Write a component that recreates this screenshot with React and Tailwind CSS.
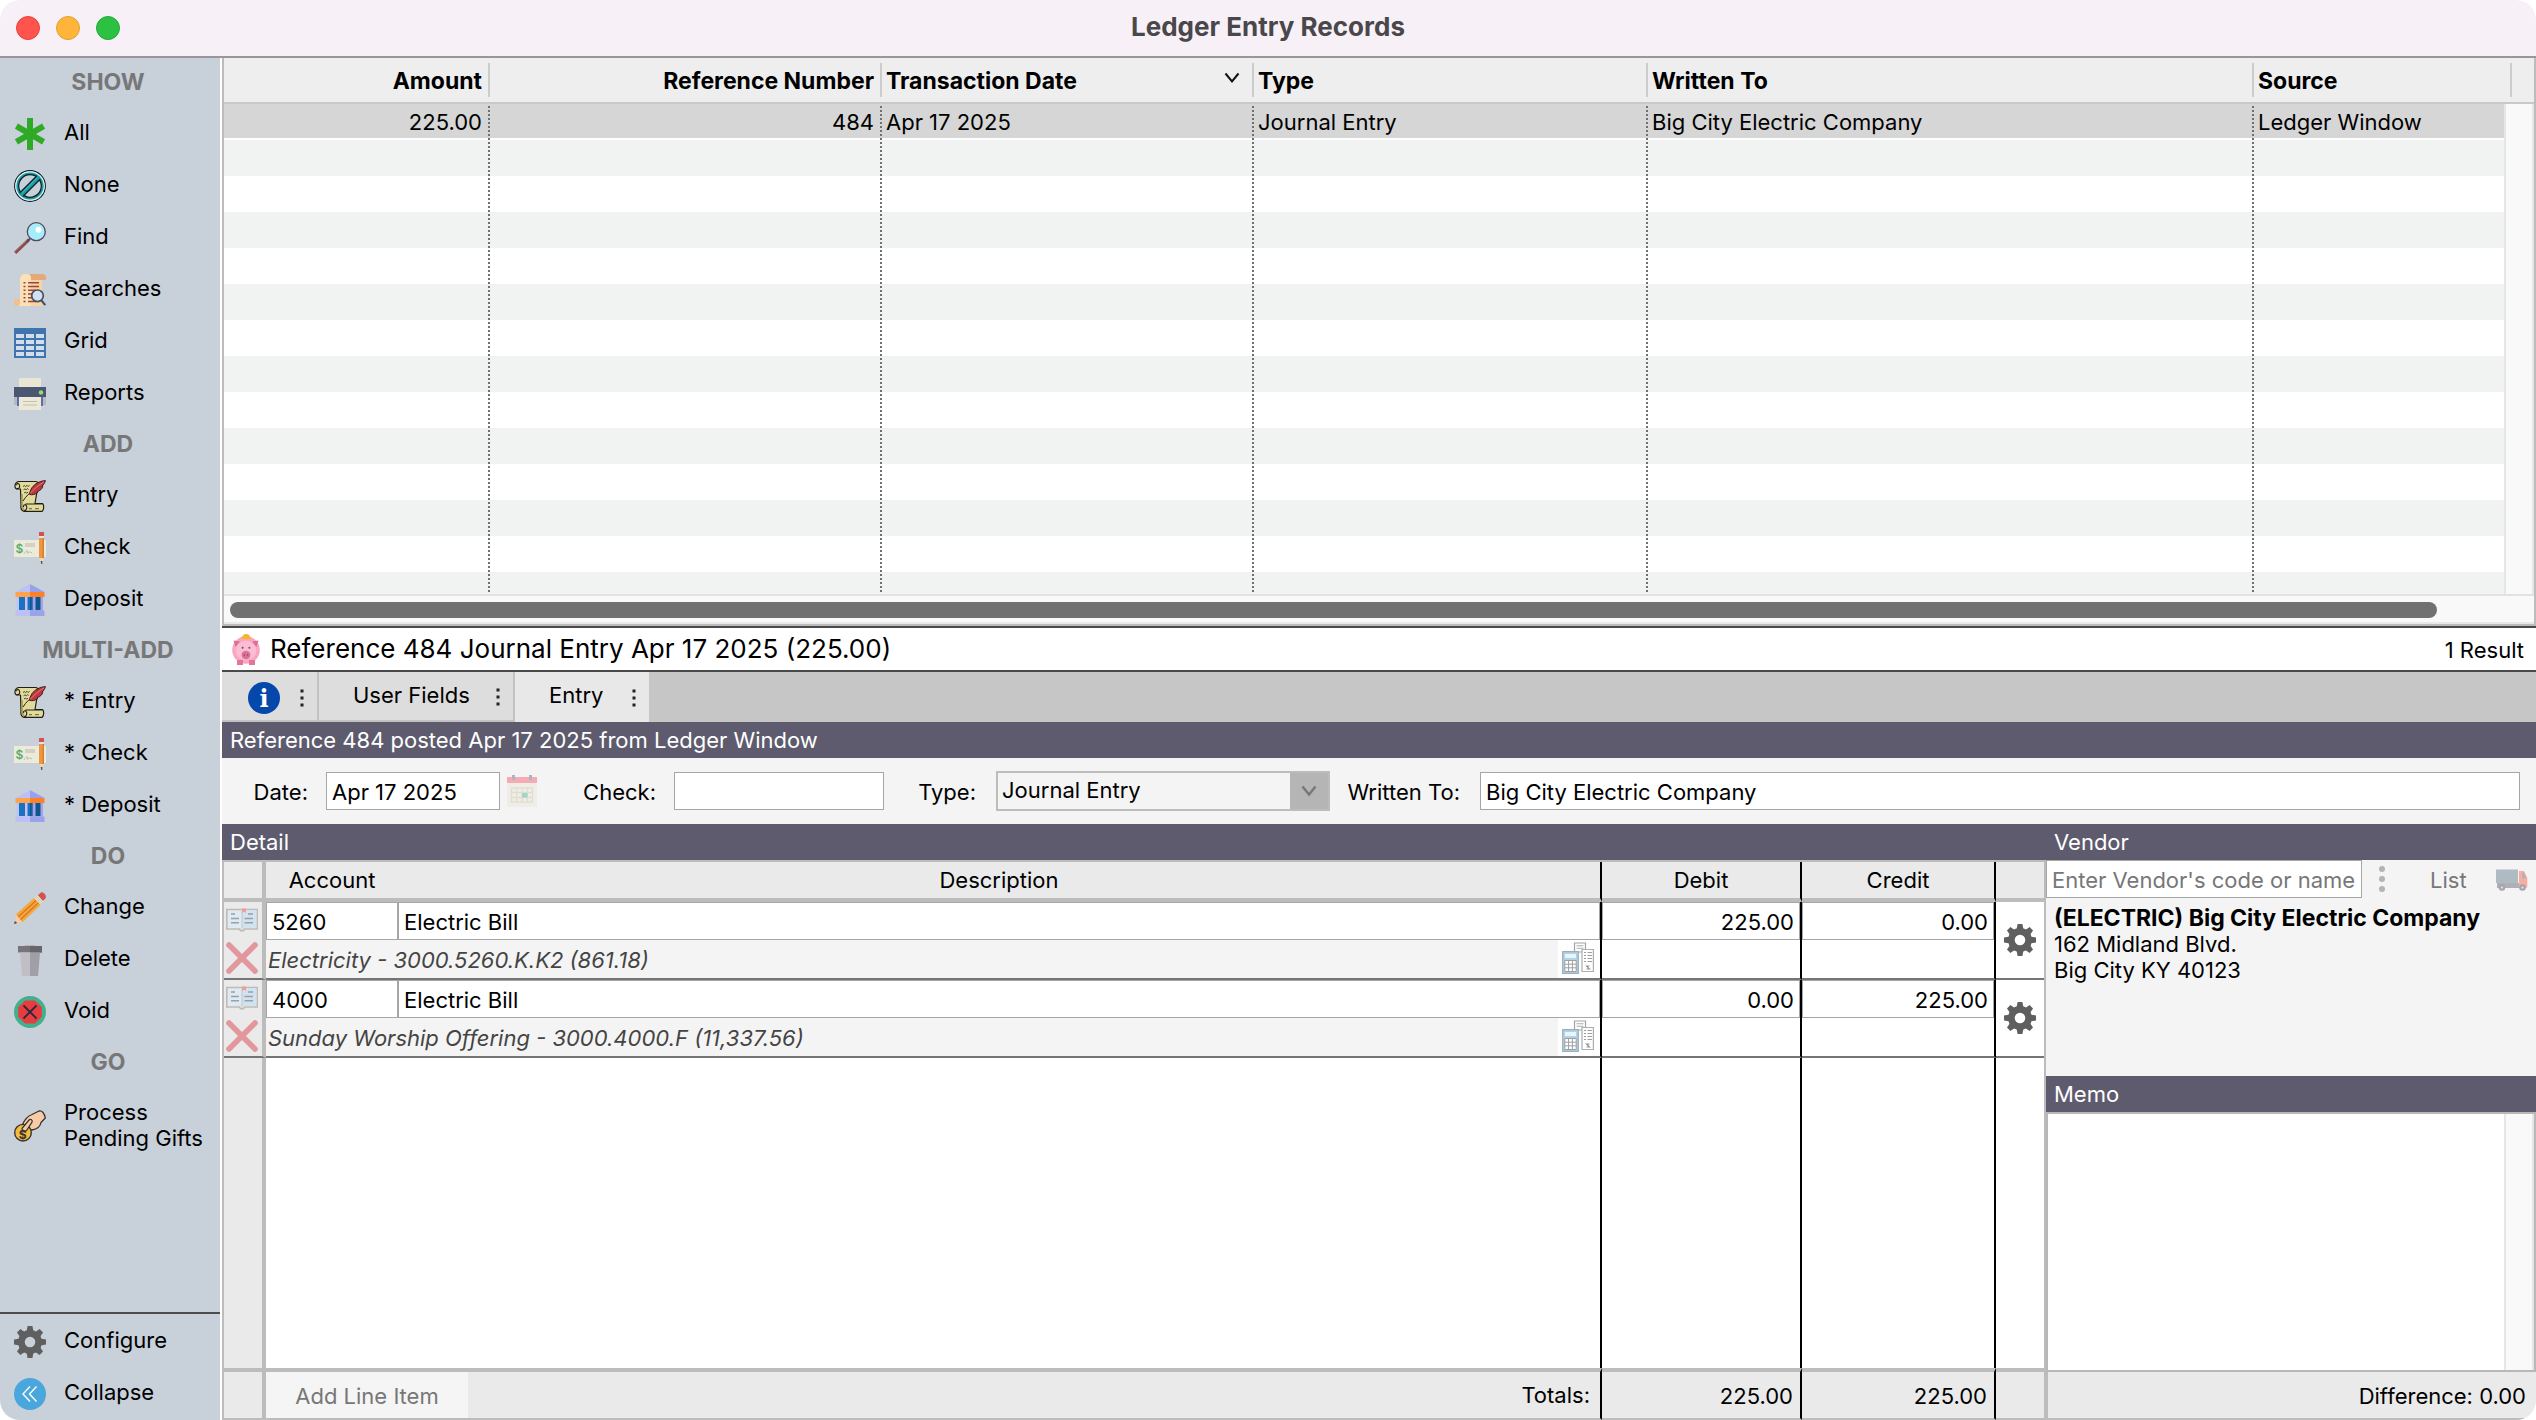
import React from "react";

/* ---------- icons ---------- */

function Svg({ children, className = "size-8", box = "0 0 32 32" }) {
  return (
    <svg viewBox={box} className={`${className} shrink-0`} aria-hidden="true" fill="none">
      {children}
    </svg>
  );
}

const AsteriskIcon = () => (
  <Svg>
    <g stroke="#2faa27" strokeWidth="6">
      <path d="M16 0V32" />
      <path d="M2.4 8.2L29.6 23.8" />
      <path d="M29.6 8.2L2.4 23.8" />
    </g>
  </Svg>
);

const NoneIcon = () => (
  <Svg>
    <circle cx="16" cy="16" r="15.3" stroke="#0a1a1c" strokeWidth="1.2" />
    <circle cx="16" cy="16" r="14" stroke="#d8f3f3" strokeWidth="1.6" />
    <circle cx="16" cy="16" r="12.6" stroke="#179aa3" strokeWidth="2" />
    <circle cx="16" cy="16" r="11.3" stroke="#0a1a1c" strokeWidth="1.2" />
    <path d="M24.6 7.4L7.4 24.6" stroke="#0a1a1c" strokeWidth="6" />
    <path d="M25 7L7 25" stroke="#179aa3" strokeWidth="3.8" />
    <path d="M23 8.2L8 23.2" stroke="#5cc8cc" strokeWidth="0.8" />
  </Svg>
);

const FindIcon = () => (
  <Svg>
    <path d="M1.2 30.8L15 17.6" stroke="#8a4d4d" strokeWidth="3.2" />
    <path d="M1 29.6L13 18" stroke="#b07070" strokeWidth="0.8" />
    <path d="M13 19.6L16 16.6" stroke="#54485e" strokeWidth="2" />
    <circle cx="22.3" cy="9.7" r="9" fill="#a5edfb" stroke="#54485e" strokeWidth="1.3" />
    <circle cx="24.5" cy="7.8" r="3" fill="#fff" />
  </Svg>
);

const SearchesIcon = () => (
  <Svg>
    <path d="M0 25h6v7H3a3 3 0 0 1-3-3z" fill="#f1c08c" />
    <path d="M6 5a5 5 0 0 1 5-5h17v32H4a3 3 0 0 0 2-3z" fill="#fde0b8" />
    <path d="M17 5h11v27H17z" fill="#fbd2a4" />
    <path d="M13 0h15a4 4 0 0 1 4 4v2H17V4a4 4 0 0 0-4-4z" fill="#e2aa78" />
    <g stroke="#96483a" strokeWidth="1.5">
      <path d="M9.5 8.7h2M14 8.7h11M9.5 12.5h2M14 12.5h11M9.5 16.3h2M14 16.3h8M9.5 20h2M14 20h4M9.5 23.7h2M14 23.7h5M9.5 27.4h2M14 27.4h8" />
    </g>
    <path d="M27 26L31.3 31" stroke="#47505c" strokeWidth="2" />
    <circle cx="23.5" cy="21.8" r="5.8" fill="#d3e0f4" stroke="#47505c" strokeWidth="1.7" />
  </Svg>
);

const GridIcon = () => (
  <Svg>
    <path d="M0 2H32V32H0z" fill="#3f74ae" />
    <g fill="#d3dde9">
      {[8, 14, 20, 26].map((y) =>
        [2, 12, 22].map((x) => <rect key={`${x}-${y}`} x={x} y={y} width="8" height="4" />)
      )}
    </g>
  </Svg>
);

const ReportsIcon = () => (
  <Svg>
    <path d="M5 0h22v12H5z" fill="#e9e6d3" />
    <path d="M0 9h32v10H0z" fill="#4b5673" />
    <path d="M0 19h32v8H0z" fill="#b6bac0" />
    <path d="M3 19h26v9H3z" fill="#5b70a8" />
    <path d="M5 19h22v13H5z" fill="#ece9d8" />
    <path d="M9 23.5h14M9 27h14" stroke="#c6c1a2" strokeWidth="1" />
    <circle cx="27" cy="14.5" r="2.2" fill="#93dd6b" />
  </Svg>
);

const EntryIcon = () => (
  <Svg>
    <path
      d="M4.5 1.5h17c2 0 3 1.5 2.5 4L21 23.5H28.5c1.6 1.4 1.6 6-.3 7.8H10c-2.4-.6-3.4-3-3-6L6.5 9H2.5C0 7.4 .5 2.5 4.5 1.5z"
      fill="#e2dc9c"
      stroke="#221f16"
      strokeWidth="1.2"
      strokeLinejoin="round"
    />
    <path d="M2.5 8.6C5.5 9 6.4 6.5 5.2 4.3c-1-1.5-2.8-.8-2.6 1" stroke="#221f16" strokeWidth="1.1" />
    <path d="M8 14v10c0 3 .6 5 2.4 6" stroke="#a49a52" strokeWidth="1.6" />
    <path d="M10 31c3-.5 3.6-4.5 1.7-6-1.4-.8-2.6.5-2 2M11.5 24H28" stroke="#221f16" strokeWidth="1.1" />
    <path d="M15 28.7h3M21 28.7h4" stroke="#57512a" strokeWidth=".9" />
    <path d="M9 6.5l1.5-1 1 1.2 1.5-1.4 1 1.2 1.5-1M9.500 9.8l1.5-1 1.2 1 1.5-1.2 1 1M10 13l1.5-1 1 1.2 1.5-1" stroke="#3b3726" strokeWidth=".9" />
    <path d="M9 21C12 16 16 12.5 21 9" stroke="#221f16" strokeWidth="1" />
    <path
      d="M31.4.6C26 .8 20.5 4 18 7.6c-1.500 2.4-2.200 4.500-2.700 6.700 2.700 1.200 6.500.1 8.700-2.200l-.6-.6c2.600-.6 4.600-2.600 5.400-5l-.8-.3C29.8 4.600 30.9 2.700 31.4.6z"
      fill="#b9393f"
      stroke="#3a1216"
      strokeWidth=".9"
    />
    <path d="M16 13.4C20 9 25 5 30 1.8" stroke="#ef8f86" strokeWidth=".8" />
  </Svg>
);

const CheckIcon = () => (
  <Svg>
    <path d="M0 8h32v17H0z" fill="#eceadb" />
    <path d="M11 12h10M11 14h10" stroke="#cbc9ba" strokeWidth="1.3" />
    <path d="M10 22c2-3 3-4 3.5-3s-1 3 .5 2 1-1.5 2-1 1 .8 2 .6" stroke="#b9b7a8" strokeWidth=".9" />
    <text x="1.600" y="21" fontSize="12" fontWeight="600" fontFamily="Inter, sans-serif" fill="#55ad6b">$</text>
    <path d="M25 1.500a1 1 0 0 1 1-1.500h3a1 1 0 0 1 1 1.500V4h-5z" fill="#cf5150" />
    <path d="M25 4h5v2h-5z" fill="#e3e3e6" />
    <path d="M25 6h5v20h-5z" fill="#ee9743" />
    <path d="M28.5 6h1.500v20h-1.500z" fill="#d87f2c" />
    <path d="M25 26h5l-2 4h-1z" fill="#f3d6ae" />
    <path d="M26.7 29h1.600v3h-1z" fill="#4d4a4a" />
  </Svg>
);

const BankIcon = () => (
  <Svg>
    <path d="M16 0L1.500 8H16z" fill="#bcc0f4" />
    <path d="M16 0L30.500 8H16z" fill="#99a1ea" />
    <path d="M2.500 12H16V27H2.500z" fill="#c0c5f5" />
    <path d="M16 12H29V27H16z" fill="#9fa7ec" />
    <path d="M1.500 8H16v5H1.500z" fill="#ffa24c" />
    <path d="M16 8H30.500v5H16z" fill="#ff8124" />
    <path d="M5 13h6v13H5zM13.500 13H16v13h-2.500z" fill="#1275c4" />
    <path d="M16 13h2.500v13H16zM21.500 13h5v13h-5z" fill="#12558c" />
    <path d="M9.500 13h1.500v13H9.500zM17.500 13h1v13h-1z" fill="#3b62b4" />
    <path d="M1.500 26.500H16V32H1.500z" fill="#bcc0f4" />
    <path d="M16 26.500H30.500V32H16z" fill="#9aa2ea" />
  </Svg>
);

const PencilIcon = () => (
  <Svg>
    <path d="M23.500 3.500L27 .6c1.800-1.400 6 3 4.700 5.400L28.500 9.500z" fill="#d4524a" />
    <path d="M20 6L23.500 3l6 6.500L26.500 13z" fill="#e6e2cf" />
    <path d="M21.200 5L27.500 12M22.400 4l6.300 6.800" stroke="#b7b49d" strokeWidth=".6" />
    <path d="M20 6l6.500 7L8.500 30.200 1.800 22.500z" fill="#f3a83a" />
    <path d="M22.200 8.400L4 24.900M24.400 10.800L6.300 27.700" stroke="#dd7426" strokeWidth="1.300" />
    <path d="M1.800 22.500L8.500 30.200 1 31.800z" fill="#f6caa6" />
    <path d="M.9 29L0 32l3.200-.9z" fill="#444" />
  </Svg>
);

const TrashIcon = () => (
  <Svg>
    <path d="M11 1h10v2H11z" fill="#b4b3b8" />
    <path d="M4 2h24v6.500H4z" fill="#77757c" />
    <path d="M16 2h12v6.500H16z" fill="#67656c" />
    <path d="M6 8.500H16V32H8z" fill="#c1bfc5" />
    <path d="M16 8.500H26L24 32H16z" fill="#a09ea6" />
  </Svg>
);

const VoidIcon = () => (
  <Svg>
    <circle cx="16" cy="16" r="16" fill="#42b08c" />
    <path d="M11 4.500h10l6.800 6.700v9.600L21 27.500H11l-6.800-6.700v-9.600z" fill="#e73d41" />
    <path d="M9.500 9.500l13 13M22.500 9.500l-13 13" stroke="#2c2a3a" strokeWidth="1.800" />
  </Svg>
);

const GiftIcon = () => (
  <Svg>
    <path
      d="M8.500 14.500C11 9 13.500 6 18 4.500L25 1c3-.8 5.500 2.500 6.300 7L27 12.500c-.6 4-4 6.500-9 7.500l-5.500 1z"
      fill="#f6cba6"
      stroke="#353433"
      strokeWidth="1.300"
      strokeLinejoin="round"
    />
    <circle cx="9" cy="22.700" r="8.300" fill="#f3bc3d" stroke="#353433" strokeWidth="1.400" />
    <path d="M8 18.500L15 10c1.600-1.500 4 .2 3 2.200l-5.500 8.300c-2 1.600-5 .2-4.500-2z" fill="#f6cba6" stroke="#353433" strokeWidth="1.200" />
    <text x="4.800" y="28.500" fontSize="12" fontWeight="700" fontFamily="Inter, sans-serif" fill="#353433">$</text>
  </Svg>
);

const GearIcon = () => (
  <Svg>
    <g fill="#5f5f5f">
      {[0, 45, 90, 135, 180, 225, 270, 315].map((a) => (
        <path key={a} d="M12.400 6L13.600 0h4.800l1.200 6z" transform={`rotate(${a} 16 16)`} />
      ))}
    </g>
    <circle cx="16" cy="16" r="8.600" stroke="#5f5f5f" strokeWidth="6.600" />
  </Svg>
);

const CollapseIcon = () => (
  <Svg>
    <circle cx="16" cy="16" r="16" fill="#4aa7de" />
    <path d="M16 8.500L9 16l7 7.500M22.500 8.500L15.500 16l7 7.500" stroke="#fff" strokeWidth="1.400" />
  </Svg>
);

const PigIcon = () => (
  <Svg className="h-8 w-7" box="0 0 28 32">
    <path d="M9.500 6a4.700 4.700 0 0 1 9.400 0z" fill="#f5b52c" />
    <circle cx="14" cy="17" r="13.800" fill="#fba5c2" />
    <path d="M5 27h6v5H5zM17 27h6v5h-6z" fill="#e0769c" />
    <path d="M1.500 7.500L8 8.600 3.500 14zM26.500 7.500L20 8.600 24.500 14z" fill="#dc6f95" />
    <ellipse cx="14" cy="17.500" rx="10.300" ry="9.700" fill="#fcbdd3" />
    <circle cx="10.600" cy="14.800" r="1" fill="#5b5568" />
    <circle cx="17.400" cy="14.800" r="1" fill="#5b5568" />
    <ellipse cx="14" cy="22" rx="4.500" ry="4.200" fill="#dc7297" />
    <ellipse cx="12.400" cy="22" rx=".8" ry="1.200" fill="#b24a74" />
    <ellipse cx="15.600" cy="22" rx=".8" ry="1.200" fill="#b24a74" />
    <path d="M9.500 6a4.700 4.700 0 0 1 9.400 0z" fill="#f5b52c" />
  </Svg>
);

const InfoIcon = () => (
  <Svg>
    <circle cx="16" cy="16" r="16" fill="#0548ab" />
    <text x="16" y="25" textAnchor="middle" fontSize="24" fontWeight="700" fontFamily="'DejaVu Serif', serif" fill="#fff">i</text>
  </Svg>
);

const CalendarIcon = () => (
  <Svg className="h-8 w-[30px] opacity-60" box="0 0 30 32">
    <path d="M0 2h30v30H0z" fill="#edeadf" />
    <path d="M0 2h30v6H0z" fill="#f77c8a" />
    <path d="M5 0h3v5H5zM22 0h3v5h-3z" fill="#7f8b96" />
    <path d="M4.500 13h21v14h-21zM4.500 17.500h21M4.500 22.500h21M9.700 13v14M15 13v14M20.300 13v14" stroke="#d6d1bb" strokeWidth="1.300" />
    <path d="M15 18h5.500v4.500H15z" fill="#5fc7ac" />
  </Svg>
);

const BookIcon = () => (
  <Svg className="h-6 w-8 opacity-60" box="0 0 32 24">
    <path d="M.8 1.500h30.400V21H18.500l-1 1.600h-3L13.500 21H.8z" fill="#d9edf9" stroke="#a59c93" strokeWidth="1.600" />
    <path d="M16 2h14.400v18H16z" fill="#bfe0f5" />
    <path d="M16 3v18" stroke="#a59c93" strokeWidth=".8" />
    <path d="M16 .5h4V5l-2-1.500L16 5z" fill="#ee6a5f" />
    <path d="M5 6h4M5 10.500h8M5 14.800h8M22 6h5M18.500 10.500H27M18.500 14.800H27" stroke="#6a6a78" strokeWidth="1.500" />
  </Svg>
);

const RemoveIcon = () => (
  <Svg>
    <path d="M3 3L29 29M29 3L3 29" stroke="#e2979c" strokeWidth="5.600" strokeLinecap="round" />
  </Svg>
);

const CalcIcon = () => (
  <Svg className="size-8 opacity-70">
    <path d="M12.500 1h11v9h-11z" fill="#fff" stroke="#7e7e82" strokeWidth="1.200" />
    <path d="M14.500 3.700h7M14.500 6.300h7" stroke="#8c8c90" strokeWidth="1.100" />
    <path d="M20 7.500h11.400V29.500H20z" fill="#fff" stroke="#8c8c90" strokeWidth="1.200" />
    <path d="M22 10.500h2M25.500 10.500h4.500M22 13.500h2M25.500 13.500h4.500M22 16.500h2M25.500 16.500h4.500M22 19.500h2M25.500 19.500h4.500" stroke="#77777b" strokeWidth="1.200" />
    <path d="M24.500 27h3l-3-3h3" stroke="#66666a" strokeWidth="1.100" />
    <path d="M.7 9.700h15.600v21.600H.7z" fill="#93bfd6" stroke="#6d8ea2" strokeWidth="1.200" />
    <path d="M3 12h11v4H3z" fill="#dff1fa" />
    <path d="M2.800 18.500h11.400v11H2.800z" fill="#fff" stroke="#77777b" strokeWidth="1" />
    <path d="M6.600 18.500v11M10.400 18.500v11M2.800 22.200h11.400M2.800 25.800h11.400" stroke="#77777b" strokeWidth="1" />
  </Svg>
);

const TruckIcon = () => (
  <Svg className="h-6 w-8 opacity-50" box="0 0 32 24">
    <path d="M0 1.500h22V15H0z" fill="#6c8491" />
    <path d="M1 15h29v5H1z" fill="#6d6a80" />
    <path d="M23 3h5l3.300 7v9.500H23z" fill="#fb6b4e" />
    <path d="M26 4.500h2l2.500 6H26z" fill="#7a6f83" />
    <circle cx="6" cy="19.500" r="3.300" fill="#5a5566" />
    <circle cx="6" cy="19.500" r="1.300" fill="#b9b6c2" />
    <circle cx="26.500" cy="19.500" r="3.300" fill="#5a5566" />
    <circle cx="26.500" cy="19.500" r="1.300" fill="#b9b6c2" />
  </Svg>
);

const TabDots = () => (
  <Svg className="h-5 w-1" box="0 0 4 20">
    <path d="M.5 1.500h3v3h-3zM.5 8.500h3v3h-3zM.5 15.500h3v3h-3z" fill="#222" />
  </Svg>
);

const Chevron = ({ color, width, className }) => (
  <Svg className={className} box="0 0 16 12">
    <path d="M1.500 1.500L8 9.500l6.500-8" stroke={color} strokeWidth={width} />
  </Svg>
);

/* ---------- sidebar ---------- */

const GROUPS = [
  {
    title: "SHOW",
    items: [
      ["All", AsteriskIcon],
      ["None", NoneIcon],
      ["Find", FindIcon],
      ["Searches", SearchesIcon],
      ["Grid", GridIcon],
      ["Reports", ReportsIcon],
    ],
  },
  { title: "ADD", items: [["Entry", EntryIcon], ["Check", CheckIcon], ["Deposit", BankIcon]] },
  { title: "MULTI-ADD", items: [["* Entry", EntryIcon], ["* Check", CheckIcon], ["* Deposit", BankIcon]] },
  { title: "DO", items: [["Change", PencilIcon], ["Delete", TrashIcon], ["Void", VoidIcon]] },
  { title: "GO", items: [["Process Pending Gifts", GiftIcon, true]] },
];

function SideItem({ label, Icon, tall }) {
  return (
    <button type="button" className={`flex w-full items-center gap-[18px] pl-3.5 text-left ${tall ? "h-[76px]" : "h-[52px]"}`}>
      <Icon />
      <span className={`flex-1 leading-[26px] ${tall ? "pb-0.5" : "pb-1"}`}>{label}</span>
    </button>
  );
}

function Sidebar() {
  return (
    <nav className="flex w-[220px] shrink-0 flex-col bg-[#c8d0da]">
      {GROUPS.map((g) => (
        <section key={g.title}>
          <h2 className="flex h-[50px] items-center justify-center pr-1 pb-0.5 text-[23px] font-bold text-[#777]">{g.title}</h2>
          {g.items.map(([label, Icon, tall]) => (
            <SideItem key={label} label={label} Icon={Icon} tall={tall} />
          ))}
        </section>
      ))}
      <div className="mt-auto border-t-2 border-[#4c4c4c] pt-0.5">
        <SideItem label="Configure" Icon={GearIcon} />
        <SideItem label="Collapse" Icon={CollapseIcon} />
      </div>
    </nav>
  );
}

/* ---------- record list ---------- */

const DOTTED =
  "bg-[repeating-linear-gradient(to_bottom,transparent_0_2px,#707070_2px_4px)] bg-[length:2px_100%] bg-right bg-no-repeat";

function HeadCell({ children, right, sort }) {
  return (
    <th scope="col" className="h-[46px] border-b-2 border-[#c9c9c9] p-0 text-[23px] font-bold">
      <div className={`flex h-[34px] items-center border-r-2 border-[#ccc] pl-1 ${right ? "justify-end pr-1.5" : "justify-between pr-3"}`}>
        <span className="pt-0.5">{children}</span>
        {sort && <Chevron color="#111" width="2" className="mb-1 h-3 w-4" />}
      </div>
    </th>
  );
}

function RecordList() {
  const cells = ["225.00", "484", "Apr 17 2025", "Journal Entry", "Big City Electric Company", "Ledger Window"];
  return (
    <section className="flex h-[568px] shrink-0 flex-col border-x-2 border-b-2 border-[#bcbcbc]">
      <div className="relative min-h-0 flex-1 overflow-hidden border-b-2 border-[#e2e2e2] bg-white">
        <table className="w-full table-fixed border-separate border-spacing-0 text-left">
          <colgroup>
            <col className="w-[266px]" />
            <col className="w-[392px]" />
            <col className="w-[372px]" />
            <col className="w-[394px]" />
            <col />
            <col className="w-[258px]" />
            <col className="w-[22px]" />
          </colgroup>
          <thead className="bg-[#eeeeee]">
            <tr>
              <HeadCell right>Amount</HeadCell>
              <HeadCell right>Reference Number</HeadCell>
              <HeadCell sort>Transaction Date</HeadCell>
              <HeadCell>Type</HeadCell>
              <HeadCell>Written To</HeadCell>
              <HeadCell>Source</HeadCell>
              <th aria-hidden="true" className="border-b-2 border-[#c9c9c9]" />
            </tr>
          </thead>
          <tbody>
            <tr className="bg-[linear-gradient(#d6d6d6_34px,#fff_34px)]">
              {cells.map((c, i) => (
                <td key={c} className={`h-9 py-0 ${i < 2 ? "pr-2 text-right" : "pl-1"} ${i < 5 ? DOTTED : ""}`}>
                  {c}
                </td>
              ))}
              <td />
            </tr>
            {Array.from({ length: 13 }, (_, r) => (
              <tr key={r} className={r % 2 ? "bg-white" : "bg-[#f1f3f2]"}>
                {cells.map((c, i) => (
                  <td key={c} className={`h-9 p-0 ${i < 5 ? DOTTED : ""}`} />
                ))}
                <td />
              </tr>
            ))}
          </tbody>
        </table>
        <div className="absolute top-[46px] right-0 bottom-0 w-[30px] border-x-2 border-[#e6e6e6] bg-[#f9f9f9]" />
      </div>
      <div className="flex h-7 items-center border-b-2 border-[#e8e8e8] bg-[#f9f9f9] pt-0.5 pr-[97px] pl-1.5">
        <div className="h-4 flex-1 rounded-full bg-[#717171]" />
      </div>
    </section>
  );
}

/* ---------- entry form ---------- */

const FIELD = "min-w-0 border border-[#a6a6a6] bg-white px-[5px] pt-0.5 outline-none";
const BAR = "flex h-9 shrink-0 items-center bg-[#5d5b6d] pl-2 text-white";

function Tabs() {
  return (
    <div role="tablist" className="flex h-[50px] shrink-0 bg-[#c6c6c6]">
      <button type="button" role="tab" aria-selected="false" aria-label="Information" className="flex w-[97px] items-center gap-5 border-r-2 border-b-2 border-[#c2c2c2] bg-[#dddddd] pt-1 pl-[26px]">
        <InfoIcon />
        <TabDots />
      </button>
      <button type="button" role="tab" aria-selected="false" className="flex w-[196px] items-center justify-between border-r-2 border-b-2 border-[#c2c2c2] bg-[#dddddd] pt-0.5 pr-[13px] pl-[34px]">
        <span className="pb-1">User Fields</span>
        <TabDots />
      </button>
      <button type="button" role="tab" aria-selected="true" className="flex w-[134px] items-center justify-between bg-[#e8e8e8] pt-0.5 pr-[13px] pl-[34px]">
        <span className="pb-1.5">Entry</span>
        <TabDots />
      </button>
    </div>
  );
}

function EntryForm() {
  return (
    <form className="flex h-[66px] shrink-0 items-center bg-[#f4f4f4] pr-4">
      <label htmlFor="date" className="w-[104px] pt-0.5 pr-[18px] text-right">Date:</label>
      <input id="date" defaultValue="Apr 17 2025" className={`${FIELD} h-[38px] w-[174px]`} />
      <button type="button" aria-label="Pick a date" className="ml-[7px]"><CalendarIcon /></button>
      <label htmlFor="check" className="w-[137px] pt-0.5 pr-[18px] text-right">Check:</label>
      <input id="check" className={`${FIELD} h-[38px] w-[210px]`} />
      <label htmlFor="type" className="w-28 pt-0.5 pr-5 text-right">Type:</label>
      <div className="relative flex h-10 w-[334px] border-2 border-[#bcbcbc]">
        <select id="type" className="w-full appearance-none bg-[#f4f4f4] pb-0.5 pl-1 outline-none">
          <option>Journal Entry</option>
        </select>
        <span className="pointer-events-none absolute inset-y-0 right-0 flex w-[38px] items-center justify-center bg-[#b5b5b5]">
          <Chevron color="#777" width="2.4" className="h-3 w-4" />
        </span>
      </div>
      <label htmlFor="written" className="w-[150px] pt-0.5 pr-5 text-right whitespace-nowrap">Written To:</label>
      <input id="written" defaultValue="Big City Electric Company" className={`${FIELD} h-[38px] flex-1`} />
    </form>
  );
}

const LINES = [
  { account: "5260", text: "Electric Bill", debit: "225.00", credit: "0.00", note: "Electricity - 3000.5260.K.K2 (861.18)" },
  { account: "4000", text: "Electric Bill", debit: "0.00", credit: "225.00", note: "Sunday Worship Offering - 3000.4000.F (11,337.56)" },
];

const GUTTER = "border-r-4 border-r-[#bcbcbc] bg-[#eaeaea] p-0";
const RULE = "border-r-2 border-r-black";
const LINE_END = "border-b-2 border-b-[#757575]";

function DetailLine({ line, n }) {
  const cellInput = `${FIELD} block h-[38px] w-full`;
  return (
    <>
      <tr className="bg-white">
        <td className={`${GUTTER} h-[38px]`}>
          <button type="button" aria-label="Look up account" className="block pb-0.5 pl-0.5"><BookIcon /></button>
        </td>
        <td className="p-0"><input aria-label={`Account ${n}`} defaultValue={line.account} className={cellInput} /></td>
        <td className={`${RULE} p-0`}><input aria-label={`Description ${n}`} defaultValue={line.text} className={cellInput} /></td>
        <td className={`${RULE} p-0`}><input aria-label={`Debit ${n}`} defaultValue={line.debit} className={`${cellInput} text-right`} /></td>
        <td className={`${RULE} p-0`}><input aria-label={`Credit ${n}`} defaultValue={line.credit} className={`${cellInput} text-right`} /></td>
        <td rowSpan={2} className={`${LINE_END} p-0`}>
          <button type="button" aria-label={`Options ${n}`} className="block pl-2"><GearIcon /></button>
        </td>
      </tr>
      <tr className="bg-white">
        <td className={`${GUTTER} ${LINE_END} h-10`}>
          <button type="button" aria-label="Remove line" className="block pb-0.5 pl-0.5"><RemoveIcon /></button>
        </td>
        <td colSpan={2} className={`${RULE} ${LINE_END} p-0`}>
          <div className="flex h-[38px]">
            <span className="flex flex-1 items-center bg-[#f4f4f4] pt-0.5 pl-0.5 text-[#444] italic">{line.note}</span>
            <button type="button" aria-label="Calculator" className="flex w-[42px] items-center pb-0.5 pl-1"><CalcIcon /></button>
          </div>
        </td>
        <td className={`${RULE} ${LINE_END}`} />
        <td className={`${RULE} ${LINE_END}`} />
      </tr>
    </>
  );
}

function Detail() {
  const head = "h-10 border-b-4 border-b-[#bcbcbc] p-0 text-center font-normal";
  const foot = "h-[52px] border-t-4 border-b-2 border-t-[#bcbcbc] border-b-[#bcbcbc] p-0";
  return (
    <section className="flex min-w-0 flex-1 flex-col">
      <h2 className={BAR}>Detail</h2>
      <div className="min-h-0 flex-1 border-x-2 border-t-2 border-[#bcbcbc]">
        <table className="h-full w-full table-fixed border-separate border-spacing-0">
          <colgroup>
            <col className="w-[42px]" />
            <col className="w-[132px]" />
            <col />
            <col className="w-[200px]" />
            <col className="w-[194px]" />
            <col className="w-12" />
          </colgroup>
          <thead className="bg-[#eaeaea]">
            <tr>
              <th className={`${GUTTER} ${head}`} aria-label="Actions" />
              <th scope="col" className={head}>Account</th>
              <th scope="col" className={`${head} ${RULE}`}>Description</th>
              <th scope="col" className={`${head} ${RULE}`}>Debit</th>
              <th scope="col" className={`${head} ${RULE}`}>Credit</th>
              <th className={head} aria-label="Options" />
            </tr>
          </thead>
          <tbody className="bg-white">
            {LINES.map((line, i) => (
              <DetailLine key={line.account} line={line} n={i + 1} />
            ))}
            <tr>
              <td className={GUTTER} />
              <td colSpan={2} className={RULE} />
              <td className={RULE} />
              <td className={RULE} />
              <td />
            </tr>
          </tbody>
          <tfoot className="bg-[#eaeaea]">
            <tr>
              <td className={`${GUTTER} ${foot}`} />
              <td colSpan={2} className={`${foot} ${RULE}`}>
                <div className="flex h-[46px] items-center justify-between pr-2.5">
                  <button type="button" className="h-full w-[202px] bg-[#f5f5f5] pt-0.5 text-[#777]">Add Line Item</button>
                  <span>Totals:</span>
                </div>
              </td>
              <td className={`${foot} ${RULE} pt-0.5 pr-[7px] text-right`}>225.00</td>
              <td className={`${foot} ${RULE} pt-0.5 pr-[7px] text-right`}>225.00</td>
              <td className={foot} />
            </tr>
          </tfoot>
        </table>
      </div>
    </section>
  );
}

function VendorPane() {
  return (
    <aside className="flex w-[490px] shrink-0 flex-col bg-[#f4f4f4]">
      <h2 className={BAR}>Vendor</h2>
      <div className="flex h-[38px] items-center">
        <input aria-label="Vendor" placeholder="Enter Vendor's code or name" className={`${FIELD} h-full w-[316px] placeholder:text-[#777] placeholder:opacity-100`} />
        <button type="button" aria-label="Vendor options" className="ml-4 flex">
          <Svg className="h-8 w-2" box="0 0 8 32">
            <circle cx="4" cy="6" r="3" fill="#b4b4b4" />
            <circle cx="4" cy="16" r="3" fill="#b4b4b4" />
            <circle cx="4" cy="26" r="3" fill="#b4b4b4" />
          </Svg>
        </button>
        <button type="button" className="ml-11 pt-0.5 text-[#777]">List</button>
        <button type="button" aria-label="Vendors" className="mr-2 ml-auto pt-0.5"><TruckIcon /></button>
      </div>
      <address className="h-[178px] pt-[7px] pl-2 leading-[26px] not-italic">
        <strong className="block text-[23px] font-bold">(ELECTRIC) Big City Electric Company</strong>
        162 Midland Blvd.
        <br />
        Big City KY 40123
      </address>
      <h2 className={BAR}><label htmlFor="memo">Memo</label></h2>
      <div className="flex min-h-0 flex-1 border-2 border-[#b8b8b8] bg-white">
        <textarea id="memo" className="flex-1 resize-none p-1 outline-none" />
        <div className="w-[30px] border-x-2 border-[#e6e6e6] bg-[#f9f9f9]" />
      </div>
      <div className="flex h-12 shrink-0 items-center justify-end border-b-2 border-l-2 border-[#bcbcbc] bg-[#eaeaea] pt-0.5 pr-2.5">
        Difference: 0.00
      </div>
    </aside>
  );
}

export default function App() {
  return (
    <div className="flex h-screen min-h-[1300px] flex-col overflow-hidden rounded-[20px] bg-white font-['Inter',sans-serif] text-[22px] leading-7 text-black">
      <header className="flex h-[58px] shrink-0 items-center border-b-2 border-[#99959b] bg-[#f7f0f7] px-4">
        <div className="flex flex-1 gap-4">
          <button type="button" aria-label="Close" className="size-6 rounded-full border border-[#e2443f] bg-[#ff544d]" />
          <button type="button" aria-label="Minimize" className="size-6 rounded-full border border-[#dfa033] bg-[#ffb43a]" />
          <button type="button" aria-label="Zoom" className="size-6 rounded-full border border-[#27a838] bg-[#2dc143]" />
        </div>
        <h1 className="pb-0.5 text-[26px] font-bold text-[#4a474b]">Ledger Entry Records</h1>
        <div className="flex-1" />
      </header>
      <div className="flex min-h-0 flex-1">
        <Sidebar />
        <main className="ml-0.5 flex min-w-0 flex-1 flex-col">
          <RecordList />
          <div className="flex h-[46px] shrink-0 items-center gap-2.5 border-y-2 border-[#4a4a4a] pr-3 pl-2.5">
            <PigIcon />
            <h2 className="flex-1 text-[26px]">Reference 484 Journal Entry Apr 17 2025 (225.00)</h2>
            <span className="pt-0.5">1 Result</span>
          </div>
          <Tabs />
          <h2 className={BAR}>Reference 484 posted Apr 17 2025 from Ledger Window</h2>
          <EntryForm />
          <div className="flex min-h-0 flex-1">
            <Detail />
            <VendorPane />
          </div>
        </main>
      </div>
    </div>
  );
}
